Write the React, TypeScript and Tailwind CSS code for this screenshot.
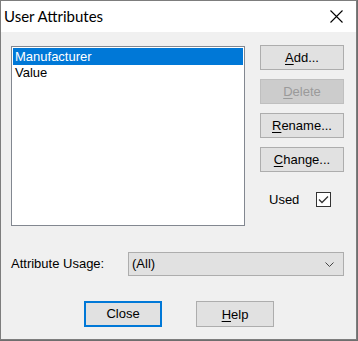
import React from 'react'

const ui = { fontFamily: '"Liberation Sans", Arial, sans-serif' }

function Btn({
  label,
  u,
  rest,
  disabled,
  className = '',
}: {
  label?: string
  u?: string
  rest?: string
  disabled?: boolean
  className?: string
}) {
  return (
    <button
      disabled={disabled}
      className={
        'flex items-center justify-center border text-[13px] leading-none ' +
        (disabled
          ? 'bg-[#cccccc] border-[#bfbfbf] text-[#9a9a9a] '
          : 'bg-[#e1e1e1] border-[#adadad] text-black ') +
        className
      }
    >
      {u && <span className="underline underline-offset-2">{u}</span>}
      {rest}
      {label}
    </button>
  )
}

export default function App() {
  return (
    <div className="w-[358px] h-[341px] bg-[#6e6e6e]" style={ui}>
      <div className="w-[357px] h-[340px] border border-[#7d7d7d] bg-[#f0f0f0] flex flex-col">
        {/* title bar */}
        <div className="h-[31px] bg-white flex items-center justify-between pl-[3px] pr-[13px]">
          <span
            className="text-[15px] text-black"
            style={{ fontFamily: 'Lato, "Noto Sans", sans-serif' }}
          >
            User Attributes
          </span>
          <svg width="13" height="13" viewBox="0 0 13 13" className="-mt-[1px]">
            <path d="M0.5 0.5 L12.5 12.5 M12.5 0.5 L0.5 12.5" stroke="#000" strokeWidth="1.1" />
          </svg>
        </div>

        <div className="flex pl-[10px] pt-[14px]">
          <div className="w-[234px] h-[180px] bg-white border border-[#828790] p-[1px] text-[13px]">
            <div className="h-[17px] bg-[#0078d7] text-white pl-[2px] leading-[17px]">Manufacturer</div>
            <div className="h-[16px] text-black pl-[2px] leading-[16px]">Value</div>
          </div>
          <div className="ml-[15px] -mt-[1px] flex flex-col gap-[9px]">
            <Btn u="A" rest="dd..." className="w-[84px] h-[25px]" />
            <Btn u="D" rest="elete" disabled className="w-[84px] h-[25px]" />
            <Btn u="R" rest="ename..." className="w-[84px] h-[25px]" />
            <Btn u="C" rest="hange..." className="w-[84px] h-[25px]" />
            <div className="flex items-center mt-[9px] pl-[9px]">
              <span className="text-[13px] text-black">Used</span>
              <div className="ml-[17px] w-[15px] h-[15px] border border-[#333333] bg-white flex items-center justify-center">
                <svg width="11" height="9" viewBox="0 0 11 9">
                  <path d="M1 4.5 L4 7.5 L10 1.5" stroke="#333" strokeWidth="1.3" fill="none" />
                </svg>
              </div>
            </div>
          </div>
        </div>

        <div className="flex items-center pl-[10px] mt-[26px]">
          <span className="w-[117px] text-[13px] text-black">Attribute Usage:</span>
          <div className="w-[216px] h-[24px] border border-[#adadad] bg-[#e1e1e1] flex items-center justify-between pl-[3px] pr-[9px] text-[13px]">
            <span>(All)</span>
            <svg width="9" height="5" viewBox="0 0 9 5">
              <path d="M0.5 0.5 L4.5 4.5 L8.5 0.5" stroke="#444" strokeWidth="1" fill="none" />
            </svg>
          </div>
        </div>

        <div className="flex pl-[83px] mt-[25px] gap-[34px]">
          <button className="w-[78px] h-[26px] border-2 border-[#0078d7] bg-[#e1e1e1] text-[13px] text-black flex items-center justify-center">
            Close
          </button>
          <Btn u="H" rest="elp" className="w-[78px] h-[26px]" />
        </div>
      </div>
    </div>
  )
}
